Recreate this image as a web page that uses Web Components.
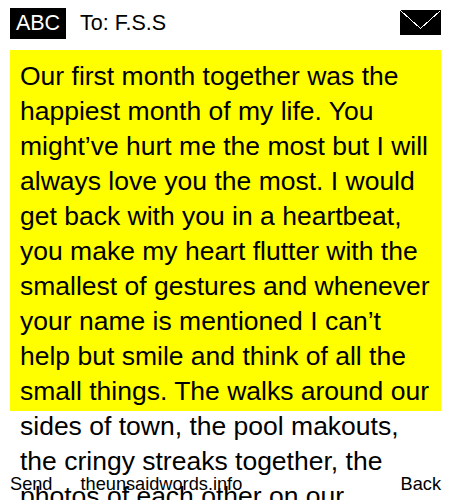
<!DOCTYPE html>
<html>
<head>
<meta charset="utf-8">
<title>The Unsaid Words</title>
<style>
html, body { margin: 0; height: 500px; overflow: hidden; background: #fff; }
body { font-family: "Liberation Sans", Arial, sans-serif; color: #000; }
</style>
</head>
<body>
<sms-screen>
	<sms-header to="To: F.S.S"></sms-header>
	<sms-message>Our first month together was the happiest month of my life. You might’ve hurt me the most but I will always love you the most. I would get back with you in a heartbeat, you make my heart flutter with the smallest of gestures and whenever your name is mentioned I can’t help but smile and think of all the small things. The walks around our sides of town, the pool makouts, the cringy streaks together, the photos of each other on our phones, the late night phone calls and all of the little things.</sms-message>
	<sms-softkeys></sms-softkeys>
</sms-screen>

<script>
class SmsScreen extends HTMLElement {
	constructor() {
		super();
		this.root = this.attachShadow({ mode: 'open' });
		this.root.innerHTML = `
		<style>
		:host {
			display: block;
			position: relative;
			width: 450px;
			height: 500px;
			overflow: hidden;
		}
		</style>
		<slot></slot>
		`;
	}
}

class SmsHeader extends HTMLElement {
	constructor() {
		super();
		this.root = this.attachShadow({ mode: 'open' });
		this.root.innerHTML = `
		<style>
		:host {
			display: flex;
			align-items: center;
			height: 31px;
			padding: 8px 9px 11px 10px;
			font-size: 21.5px;
		}
		.mode {
			width: 56px;
			height: 31px;
			line-height: 31px;
			background: #000;
			color: #fff;
			text-align: center;
		}
		.to {
			flex: 1;
			margin-left: 14px;
		}
		svg {
			display: block;
			align-self: flex-start;
			width: 41px;
			height: 25px;
			margin-top: 2px;
		}
		</style>
		<div class="mode">ABC</div>
		<div class="to">${this.getAttribute('to')}</div>
		<svg viewBox="0 0 41 25" shape-rendering="crispEdges">
		<rect width="41" height="25" fill="#000"/>
		<path d="M0.5 0.5 L20.5 18.5 L40.5 0.5" fill="none" stroke="#fff" stroke-width="1"/>
		</svg>
		`;
	}
}

class SmsMessage extends HTMLElement {
	constructor() {
		super();
		this.root = this.attachShadow({ mode: 'open' });
		this.root.innerHTML = `
		<style>
		:host {
			display: block;
			box-sizing: border-box;
			width: 431px;
			height: 361px;
			margin-left: 10px;
			padding: 9px 10px 0;
			background: #ff0;
			font-size: 26.5px;
			line-height: 35px;
		}
		</style>
		<slot></slot>
		`;
	}
}

class SmsSoftkeys extends HTMLElement {
	constructor() {
		super();
		this.root = this.attachShadow({ mode: 'open' });
		this.root.innerHTML = `
		<style>
		:host {
			position: absolute;
			left: 10px;
			right: 9px;
			bottom: 5px;
			display: flex;
			font-size: 18.2px;
			line-height: 21px;
		}
		.site {
			flex: 1;
			margin-left: 28px;
		}
		</style>
		<span>Send</span>
		<span class="site">theunsaidwords.info</span>
		<span>Back</span>
		`;
	}
}

window.customElements.define('sms-screen', SmsScreen);
window.customElements.define('sms-header', SmsHeader);
window.customElements.define('sms-message', SmsMessage);
window.customElements.define('sms-softkeys', SmsSoftkeys);
</script>
</body>
</html>
